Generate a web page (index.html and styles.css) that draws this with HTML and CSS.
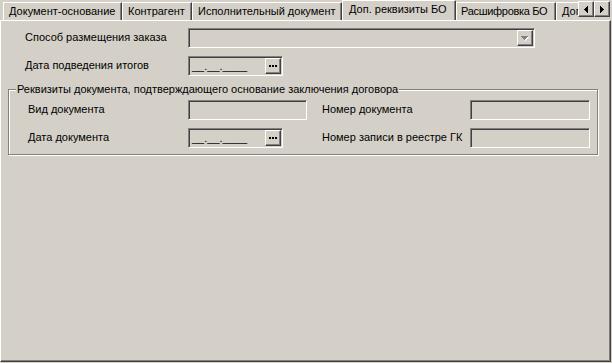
FILE: index.html
```html
<!DOCTYPE html>
<html lang="ru">

<head>
    <meta charset="UTF-8" />
    <title>Доп. реквизиты БО</title>
    <link rel="stylesheet" href="styles.css">
</head>

<body>

    <div class="tab-strip">
        <div class="tabs">
            <div class="tab">Документ-основание</div>
            <div class="tab">Контрагент</div>
            <div class="tab">Исполнительный документ</div>
            <div class="tab active">Доп. реквизиты БО</div>
            <div class="tab">Расшифровка БО</div>
            <div class="tab">Дополнительно</div>
        </div>
        <div class="tab-scroll">
            <div class="btn3d scroll-btn">
                <svg width="4" height="7" viewBox="0 0 4 7"><rect x="0" y="3" width="1" height="1"/><rect x="1" y="2" width="1" height="3"/><rect x="2" y="1" width="1" height="5"/><rect x="3" y="0" width="1" height="7"/></svg>
            </div>
            <div class="btn3d scroll-btn">
                <svg width="4" height="7" viewBox="0 0 4 7"><rect x="3" y="3" width="1" height="1"/><rect x="2" y="2" width="1" height="3"/><rect x="1" y="1" width="1" height="5"/><rect x="0" y="0" width="1" height="7"/></svg>
            </div>
        </div>
    </div>

    <div class="panel">
        <div class="form">
            <div class="row">
                <span class="label">Способ размещения заказа</span>
                <div class="field combo">
                    <div class="btn3d combo-btn">
                        <svg width="8" height="5" viewBox="0 0 8 5">
                            <g fill="#fff"><rect x="1" y="1" width="7" height="1"/><rect x="2" y="2" width="5" height="1"/><rect x="3" y="3" width="3" height="1"/><rect x="4" y="4" width="1" height="1"/></g>
                            <g fill="#808080"><rect x="0" y="0" width="7" height="1"/><rect x="1" y="1" width="5" height="1"/><rect x="2" y="2" width="3" height="1"/><rect x="3" y="3" width="1" height="1"/></g>
                        </svg>
                    </div>
                </div>
            </div>
            <div class="row">
                <span class="label">Дата подведения итогов</span>
                <div class="field date">
                    <span class="mask">__.__.____</span>
                    <div class="btn3d dots-btn">
                        <svg width="8" height="2" viewBox="0 0 8 2"><rect x="0" y="0" width="2" height="2"/><rect x="3" y="0" width="2" height="2"/><rect x="6" y="0" width="2" height="2"/></svg>
                    </div>
                </div>
            </div>
        </div>

        <div class="group">
            <div class="group-title">Реквизиты документа, подтверждающего основание заключения договора</div>
            <div class="group-grid">
                <span class="label">Вид документа</span>
                <div class="field"></div>
                <span class="label label-right">Номер документа</span>
                <div class="field"></div>

                <span class="label">Дата документа</span>
                <div class="field date">
                    <span class="mask">__.__.____</span>
                    <div class="btn3d dots-btn">
                        <svg width="8" height="2" viewBox="0 0 8 2"><rect x="0" y="0" width="2" height="2"/><rect x="3" y="0" width="2" height="2"/><rect x="6" y="0" width="2" height="2"/></svg>
                    </div>
                </div>
                <span class="label label-right">Номер записи в реестре ГК</span>
                <div class="field"></div>
            </div>
        </div>
    </div>

</body>

</html>
```

FILE: styles.css
```css
body {
    margin: 0;
    width: 612px;
    height: 363px;
    overflow: hidden;
    background-color: #d4d0c8;
    font-family: "Liberation Sans", Arial, sans-serif;
    font-size: 11px;
    color: #000;
}

/* tabs */

.tab-strip {
    display: flex;
    height: 20px;
    position: relative;
    z-index: 1;
}

.tabs {
    flex: 1;
    display: flex;
    align-items: flex-end;
    padding-left: 3px;
    overflow: hidden;
}

.tab {
    flex-shrink: 0;
    height: 18px;
    line-height: 17px;
    padding-left: 5px;
    box-sizing: border-box;
    border-top: 1px solid #fff;
    border-left: 1px solid #fff;
    border-right: 1px solid #404040;
    box-shadow: inset -1px 0 #808080;
    white-space: nowrap;
}

/* widths of the tab headers */
.tab:nth-child(1) { width: 119px; }
.tab:nth-child(2) { width: 70px; }
.tab:nth-child(3) { width: 150px; }
.tab:nth-child(4) { width: 114px; }
.tab:nth-child(5) { width: 100px; padding-left: 4px; letter-spacing: -0.3px; }
.tab:nth-child(6) { width: 90px; }

.tab.active {
    height: 21px;
    line-height: 16px;
    margin-bottom: -1px;
    padding-left: 6px;
    background-color: #d4d0c8;
}

.tab-scroll {
    display: flex;
    padding: 1px 2px 0 0;
    align-items: flex-start;
}

.btn3d {
    box-sizing: border-box;
    background-color: #d4d0c8;
    border: 1px solid;
    border-color: #fff #404040 #404040 #fff;
    box-shadow: inset -1px -1px #808080;
    display: flex;
    align-items: center;
    justify-content: center;
}

.scroll-btn {
    width: 16px;
    height: 16px;
}

.scroll-btn svg {
    fill: #000;
}

/* panel */

.panel {
    box-sizing: border-box;
    width: 611px;
    height: 342px;
    border: 1px solid;
    border-color: #fff #404040 #404040 #fff;
    box-shadow: inset -1px -1px #808080;
    padding: 7px 0 0 7px;
}

.form {
    padding-left: 17px;
    display: flex;
    flex-direction: column;
    gap: 8px;
}

.row {
    display: grid;
    grid-template-columns: 163px auto;
    align-items: center;
}

.label {
    white-space: nowrap;
    line-height: 13px;
    padding-bottom: 2px;
}

.field {
    box-sizing: border-box;
    height: 20px;
    background-color: #d4d0c8;
    border: 1px solid;
    border-color: #808080 #fff #fff #808080;
    box-shadow: inset 1px 1px #404040, inset -1px -1px #d4d0c8;
    padding: 1px;
}

.combo {
    width: 347px;
    display: flex;
    justify-content: flex-end;
}

.combo-btn {
    width: 16px;
    height: 16px;
}

.date {
    width: 95px;
    display: flex;
    justify-content: space-between;
    align-items: center;
}

.mask {
    padding-left: 2px;
    line-height: 13px;
}

.dots-btn {
    width: 16px;
    height: 16px;
}

.dots-btn svg {
    fill: #000;
}

/* group box */

.group {
    width: 590px;
    box-sizing: border-box;
    margin-top: 13px;
    border: 1px solid #808080;
    box-shadow: inset 1px 1px #fff, 1px 1px #fff;
    padding-bottom: 6px;
}

.group-title {
    display: table;
    margin: -7px 0 0 7px;
    padding: 0 1px;
    line-height: 13px;
    background-color: #d4d0c8;
    white-space: nowrap;
}

.group-grid {
    display: grid;
    grid-template-columns: 179px 119px 163px 120px;
    grid-auto-rows: 20px;
    row-gap: 8px;
    align-items: center;
    margin-top: 4px;
}

.group-grid .label {
    padding-left: 19px;
}

.group-grid .label-right {
    padding-left: 15px;
}
```
